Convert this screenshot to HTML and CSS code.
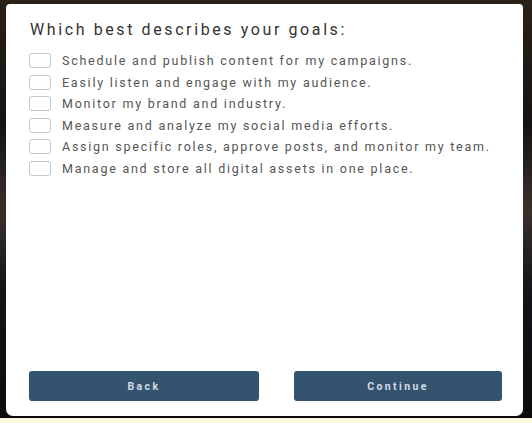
FILE: index.html
```html
<!DOCTYPE html>
<html lang="en">
<head>
    <meta charset="utf-8" />
    <meta name="viewport" content="width=device-width, initial-scale=1" />
    <title>Goals</title>
    <link rel="stylesheet" href="styles.css">
</head>
<body>
    <div class="backdrop">
        <div class="card">
            <h1>Which best describes your goals:</h1>

            <ul class="goals">
                <li><span class="box"></span>Schedule and publish content for my campaigns.</li>
                <li><span class="box"></span>Easily listen and engage with my audience.</li>
                <li><span class="box"></span>Monitor my brand and industry.</li>
                <li><span class="box"></span>Measure and analyze my social media efforts.</li>
                <li><span class="box"></span>Assign specific roles, approve posts, and monitor my team.</li>
                <li><span class="box"></span>Manage and store all digital assets in one place.</li>
            </ul>

            <div class="actions">
                <button class="btn btn-back">Back</button>
                <button class="btn btn-next">Continue</button>
            </div>
        </div>
    </div>
    <div class="strip"></div>
</body>
</html>
```

FILE: styles.css
```css
html, body {
    margin: 0;
    height: 100%;
}
body {
    font-family: Roboto, "Liberation Sans", Arial, sans-serif;
    background: #fdf8e0;
    display: flex;
    flex-direction: column;
}
.backdrop {
    height: 418px;
    background: linear-gradient(180deg, #2a2118 0%, #151312 30%, #3a302b 50%, #121418 70%, #0c0c0c 100%);
    padding: 4px 0 0 6px;
    box-sizing: border-box;
}
.card {
    width: 517px;
    height: 412px;
    background: #fff;
    border-radius: 4px 4px 7px 7px;
    box-sizing: border-box;
    padding: 17px 21px 15px 23px;
    display: flex;
    flex-direction: column;
}
h1 {
    margin: 0 0 11px 1px;
    font-size: 16px;
    font-weight: 400;
    letter-spacing: 2.6px;
    color: #333;
    line-height: 18px;
}
.goals {
    list-style: none;
    margin: 0;
    padding: 0;
    flex: 1;
}
.goals li {
    display: flex;
    align-items: center;
    height: 21.5px;
    font-size: 12.5px;
    letter-spacing: 1.75px;
    color: #555;
}
.box {
    width: 20px;
    height: 13px;
    border: 1px solid #c8c8c8;
    border-radius: 3px;
    margin-right: 11px;
    flex: none;
}
.actions {
    display: flex;
    justify-content: space-between;
}
.btn {
    height: 30px;
    border: none;
    border-radius: 3px;
    background: #34536f;
    color: #d3dbe5;
    font-family: inherit;
    font-size: 10.5px;
    font-weight: 700;
    letter-spacing: 2.4px;
}
.btn-back {
    width: 230px;
}
.btn-next {
    width: 208px;
}
.strip {
    height: 5px;
}
```
